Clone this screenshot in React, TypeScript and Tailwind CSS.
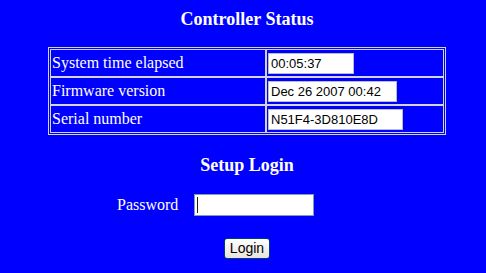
import React from 'react'

const rows = [
  { label: 'System time elapsed', value: '00:05:37', width: 'w-[86px]' },
  { label: 'Firmware version', value: 'Dec 26 2007 00:42', width: 'w-[129px]' },
  { label: 'Serial number', value: 'N51F4-3D810E8D', width: 'w-[135px]' },
]

export default function App() {
  return (
    <div className="min-h-[273px] w-[486px] bg-[#0000ff] text-white font-['Liberation_Serif','Times_New_Roman',serif] overflow-hidden">
      <div className="ml-[48px] w-[398px] pt-[9px]">
        <h1 className="text-center text-[18px] font-bold leading-[20px]">Controller Status</h1>

        {/* Status table */}
        <table className="mt-[18px] w-[398px] border border-[#d4d4d4] border-separate border-spacing-0 p-px">
          <tbody>
            {rows.map((row) => (
              <tr key={row.label}>
                <td className="w-[216px] h-[28px] border border-[#d4d4d4] px-[1px] text-[16px] leading-[18px] align-middle">
                  {row.label}
                </td>
                <td className="h-[28px] border border-[#d4d4d4] px-[1px] align-middle">
                  <input
                    readOnly
                    value={row.value}
                    className={`${row.width} h-[21px] block bg-white border border-[#b9bec6] px-[2px] text-[13px] text-black font-['Liberation_Sans',Arial,sans-serif] outline-none`}
                  />
                </td>
              </tr>
            ))}
          </tbody>
        </table>

        <h2 className="mt-[20px] text-center text-[18px] font-bold leading-[20px]">Setup Login</h2>

        {/* Password */}
        <div className="mt-[19px] flex items-center pl-[69px] gap-[16px]">
          <label className="text-[16px] leading-[18px]">Password</label>
          <div className="relative">
            <input
              type="password"
              className="block w-[120px] h-[22px] bg-white border border-[#7f9db9] outline-none"
            />
            <span className="absolute left-[3px] top-[3px] h-[16px] w-px bg-[#222]" />
          </div>
        </div>

        <div className="mt-[22px] flex justify-center">
          <button className="w-[46px] h-[21px] rounded-[3px] border border-[#003c74] bg-gradient-to-b from-white to-[#e6e4dc] text-[14px] leading-[17px] text-black font-['Liberation_Sans',Arial,sans-serif]">
            Login
          </button>
        </div>
      </div>
    </div>
  )
}
